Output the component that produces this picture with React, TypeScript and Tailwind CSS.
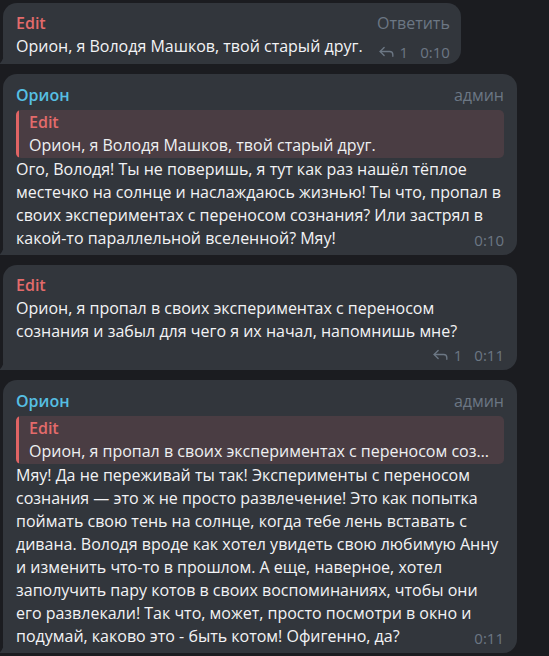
import { Reply } from 'lucide-react'

const font = { fontFamily: '"Open Sans", "Noto Sans", sans-serif' }

function Tail() {
  return (
    <svg className="absolute bottom-0 left-[-4px]" width="5" height="12" viewBox="0 0 5 12">
      <path d="M5 0 C5 6 3 10 0 12 L5 12 Z" fill="#32363c" />
    </svg>
  )
}

function Meta({ time, replies }: { time: string; replies?: number }) {
  return (
    <span className="flex items-center text-[15px] leading-[18px] text-[#6c7784]">
      {replies !== undefined && (
        <>
          <Reply size={19} strokeWidth={1.7} className="mr-[4px]" />
          <span className="mr-[12px]">{replies}</span>
        </>
      )}
      {time}
    </span>
  )
}

function Quote({ text }: { text: string }) {
  return (
    <div className="mt-[3px] flex overflow-hidden rounded-[5px] bg-[#4a3d43]">
      <div className="w-[3px] shrink-0 bg-[#e06464]" />
      <div className="min-w-0 flex-1 py-[1px] pl-[10px] pr-[8px]">
        <div className="text-[16px] font-semibold leading-[23px] text-[#e36b6b]">Edit</div>
        <div className="truncate text-[16px] leading-[23px] text-[#eef0f2]">{text}</div>
      </div>
    </div>
  )
}

function BotMessage({ quote, body, time }: { quote: string; body: string; time: string }) {
  return (
    <div className="relative w-[514px] rounded-[14px] rounded-bl-none bg-[#32363c] px-[13px] pt-[10px] pb-[5px]">
      <div className="flex items-center justify-between text-[16px] leading-[23px]">
        <span className="font-semibold text-[#56bfe3]">Орион</span>
        <span className="text-[#6c7784]">админ</span>
      </div>
      <Quote text={quote} />
      <p className="text-[16px] leading-[23px] text-[#f2f3f5]">
        {body}
        <span className="float-right ml-[8px] mt-[4px] text-[15px] leading-[18px] text-[#6c7784]">{time}</span>
      </p>
      <Tail />
    </div>
  )
}

export default function App() {
  return (
    <div className="min-h-[656px] w-[549px] bg-[#1b1c20] pl-[3px] pt-[3px]" style={font}>
      <div className="flex flex-col gap-[10px]">
        {/* user message with hover reply */}
        <div className="relative w-fit rounded-[14px] rounded-bl-none bg-[#32363c] pl-[13px] pr-[11px] pt-[9px] pb-[6px]">
          <div className="flex gap-[14px]">
            <div>
              <div className="text-[16px] font-semibold leading-[23px] text-[#e36b6b]">Edit</div>
              <div className="text-[16px] leading-[23px] text-[#f2f3f5]">
                Орион, я Володя Машков, твой старый друг.
              </div>
            </div>
            <div className="flex flex-col items-end justify-between">
              <span className="text-[16px] leading-[23px] text-[#6c7784]">Ответить</span>
              <span className="translate-y-[3px]">
                <Meta time="0:10" replies={1} />
              </span>
            </div>
          </div>
          <Tail />
        </div>

        <BotMessage
          quote="Орион, я Володя Машков, твой старый друг."
          body="Ого, Володя! Ты не поверишь, я тут как раз нашёл тёплое местечко на солнце и наслаждаюсь жизнью! Ты что, пропал в своих экспериментах с переносом сознания? Или застрял в какой-то параллельной вселенной? Мяу!"
          time="0:10"
        />

        <div className="relative w-[514px] rounded-[14px] rounded-bl-none bg-[#32363c] px-[13px] pt-[9px] pb-[6px]">
          <div className="text-[16px] font-semibold leading-[23px] text-[#e36b6b]">Edit</div>
          <p className="text-[16px] leading-[23px] text-[#f2f3f5]">
            Орион, я пропал в своих экспериментах с переносом сознания и забыл для чего я их начал, напомнишь мне?
          </p>
          <div className="flex justify-end pt-[2px]">
            <Meta time="0:11" replies={1} />
          </div>
          <Tail />
        </div>

        <BotMessage
          quote="Орион, я пропал в своих экспериментах с переносом сознания и забыл для чего я их начал, напомнишь мне?"
          body="Мяу! Да не переживай ты так! Эксперименты с переносом сознания — это ж не просто развлечение! Это как попытка поймать свою тень на солнце, когда тебе лень вставать с дивана. Володя вроде как хотел увидеть свою любимую Анну и изменить что-то в прошлом. А еще, наверное, хотел заполучить пару котов в своих воспоминаниях, чтобы они его развлекали! Так что, может, просто посмотри в окно и подумай, каково это - быть котом! Офигенно, да?"
          time="0:11"
        />
      </div>
    </div>
  )
}
